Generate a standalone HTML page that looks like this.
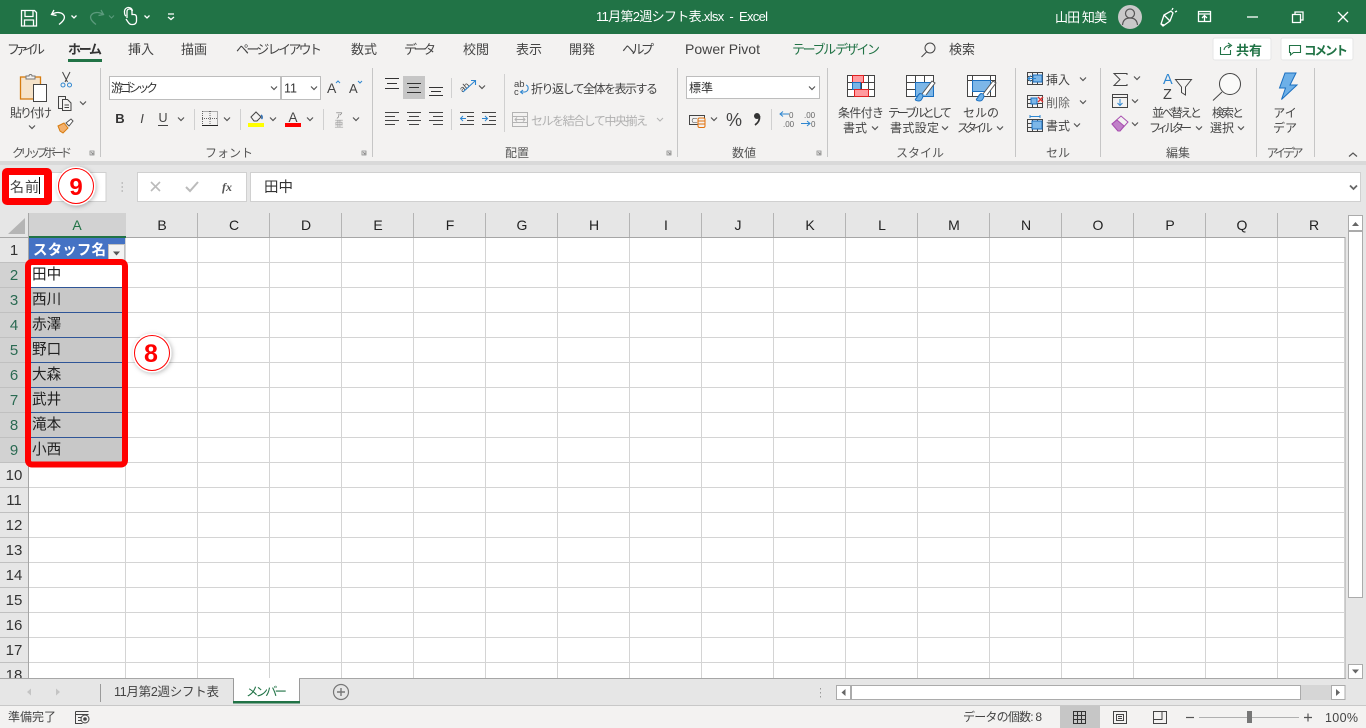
<!DOCTYPE html>
<html lang="ja"><head><meta charset="utf-8"><title>11月第2週シフト表.xlsx - Excel</title>
<style>
html,body{margin:0;padding:0;width:1366px;height:728px;overflow:hidden;background:#fff}
svg{display:block;position:absolute;left:0;top:0}
text{font-family:"Liberation Sans","Noto Sans CJK JP",sans-serif;font-size:12px;fill:#444;white-space:pre}
.tab{font-size:13px;fill:#444}
.tl{font-size:13px;fill:#fff}
.g{font-size:12px;fill:#555}
.m{text-anchor:middle}
.rh{font-size:15px;text-anchor:middle;fill:#333}
.rs{font-size:15px;text-anchor:middle;fill:#2a6a52}
.ch{font-size:14px;text-anchor:middle;fill:#222}
.c{font-size:14.6px;fill:#222}
.i{fill:none;stroke:#444;stroke-width:1}
.w{fill:none;stroke:#fff;stroke-width:1.3}
.cv{fill:none;stroke:#555;stroke-width:1.2}
</style></head><body>
<svg width="1366" height="728" viewBox="0 0 1366 728" xmlns="http://www.w3.org/2000/svg">
<defs>
<path id="c" d="M-3-1.5L0 1.5L3-1.5" fill="none" stroke="#555" stroke-width="1.2"/>
<path id="d" d="M0 0h4v4h-4zM1 1l2 2M3 1.5v1.5h-1.5" fill="none" stroke="#888" stroke-width=".8"/>
<filter id="sh" x="-40%" y="-40%" width="180%" height="180%"><feDropShadow dx="1" dy="1" stdDeviation="2.5" flood-color="#000" flood-opacity=".28"/></filter>
</defs>

<!-- backgrounds -->
<rect width="1366" height="728" fill="#e6e6e6"/>
<rect width="1366" height="34" fill="#217346"/>
<rect y="34" width="1366" height="127" fill="#f3f2f1"/>
<rect y="161" width="1366" height="4" fill="#d9d9d9"/>

<!-- quick access -->
<g class="w">
<path d="M21.5 10.5h13l2 2v13.5h-15zM25 10.5v6h8v-6M24.5 26v-6h9v6"/>
<path d="M54 10l-2.500 4.500 5 1M52 14.500c4-3 10-2.500 12 1 1.500 3-1 6-5 9"/>
</g>
<path d="M71.500 15.500L74 18l2.500-2.500" class="w" stroke-width="1"/>
<path d="M101 10l2.500 4.500-5 1M103 14.500c-4-3-10-2.500-12 1-1.500 3 1 6 5 9" fill="none" stroke="#5b9a7c" stroke-width="1.300"/>
<path d="M109 15.500L111.500 18l2.500-2.500" fill="none" stroke="#5b9a7c" stroke-width="1"/>
<path d="M127 18v-6.500a2.500 2.500 0 0 1 5 0v3h2c2 0 2.500 1.500 2.500 3v3.500c0 2-1.500 3.500-3.500 3.500h-1.500c-1.500 0-2.500-1-3.500-2.500l-2-3M126 16c-1-.5-1.500-2-1.500-4a4 4 0 0 1 8-1" class="w" stroke-width="1.200"/>
<path d="M144.500 15.500L147 18l2.500-2.500M168 14h6M168 17l3 2.500 3-2.500" class="w" stroke-width="1"/>

<!-- title -->
<text class="tl" x="596" y="21" textLength="172" lengthAdjust="spacing">11月第2週シフト表.xlsx  -  Excel</text>
<text class="tl" x="1055" y="22" textLength="52" lengthAdjust="spacing">山田 知美</text>
<circle cx="1130" cy="17" r="12" fill="#c9c9c9"/>
<circle cx="1130" cy="13.500" r="4.500" fill="none" stroke="#555" stroke-width="1.200"/>
<path d="M1122.500 25c.5-5 3.500-7 7.500-7s7 2 7.500 7" fill="none" stroke="#555" stroke-width="1.200"/>
<path d="M1161 24l3-9 7-4 2 2-3 8-7 5zM1164 15l6 6M1172 10l1-2M1175 12l2-1M1161 24l3 1" class="w" stroke-width="1.100"/>
<path d="M1198.500 11.500h12v10h-12zM1198.500 14h12M1204.500 21v-5M1202 18l2.500-2.500 2.500 2.500" class="w" stroke-width="1.100"/>
<path d="M1247 17h11" class="w"/>
<path d="M1292.500 14.500h8v8h-8zM1295 14.500v-2.500h8v8h-2.500" class="w" stroke-width="1.100"/>
<path d="M1338 12l10 10M1348 12l-10 10" class="w" stroke-width="1.200"/>

<!-- tabs -->
<text class="tab" x="7" y="54" textLength="38" lengthAdjust="spacing">ファイル</text>
<text class="tab" x="68" y="54" textLength="34" lengthAdjust="spacing" style="font-weight:700;fill:#333">ホーム</text>
<rect x="68" y="59" width="34" height="3" fill="#217346"/>
<text class="tab" x="128" y="54">挿入</text>
<text class="tab" x="181" y="54">描画</text>
<text class="tab" x="236" y="54" textLength="86" lengthAdjust="spacing">ページ レイアウト</text>
<text class="tab" x="351" y="54">数式</text>
<text class="tab" x="404" y="54" textLength="32" lengthAdjust="spacing">データ</text>
<text class="tab" x="463" y="54">校閲</text>
<text class="tab" x="516" y="54">表示</text>
<text class="tab" x="569" y="54">開発</text>
<text class="tab" x="622" y="54" textLength="32" lengthAdjust="spacing">ヘルプ</text>
<text class="tab" x="685" y="54" textLength="75" lengthAdjust="spacing" style="font-size:14px">Power Pivot</text>
<text class="tab" x="792" y="54" textLength="88" lengthAdjust="spacing" style="fill:#217346">テーブル デザイン</text>
<circle cx="930" cy="48" r="5" class="i"/><path d="M926.500 52l-5 5" class="i"/>
<text class="tab" x="949" y="54">検索</text>

<rect x="1213" y="38" width="58" height="22" rx="2" fill="#fff" stroke="#e6e6e6"/>
<path d="M1220.500 47v7.500h10V50M1224 50c.5-3 2.500-4.500 6-4.500M1228 43l3.500 2.500-3.500 2.500" fill="none" stroke="#217346" stroke-width="1.100"/>
<text x="1236" y="55" style="font-size:13px;font-weight:700;fill:#217346">共有</text>
<rect x="1281" y="38" width="72" height="22" rx="2" fill="#fff" stroke="#e6e6e6"/>
<path d="M1289.500 45.500h11v7h-7l-3 2.500v-2.500h-1z" fill="none" stroke="#217346" stroke-width="1.100"/>
<text x="1304" y="55" textLength="44" lengthAdjust="spacing" style="font-size:12.500px;font-weight:700;fill:#217346">コメント</text>

<!-- group separators -->
<path d="M100.500 68v89M372.500 68v89M677.500 68v89M827.500 68v89M1015.500 68v89M1100.500 68v89M1256.500 68v89M1314.500 68v89" stroke="#c6c6c6" fill="none"/>
<path d="M194.500 109v21M240.500 109v21M323.500 109v21M451.500 78v20M451.500 109v21M504.500 74v58M771.500 109v21" stroke="#d0d0d0" fill="none"/>

<!-- clipboard -->
<rect x="20.500" y="77" width="20" height="22" fill="#f6e3c9" stroke="#d67b0e" stroke-width="1.300"/>
<path d="M26 79v-3h3a1.500 1.500 0 0 1 3 0h3v3z" fill="#f3f2f1" stroke="#777"/>
<rect x="33.500" y="84.500" width="13" height="17" fill="#fff" stroke="#444"/>
<text class="m" x="31" y="117" textLength="42" lengthAdjust="spacing">貼り付け</text>
<use href="#c" x="32" y="127"/>
<path d="M62.500 72l5 10M70 72l-5 10" class="i"/>
<circle cx="63" cy="85" r="2" fill="none" stroke="#2e86d0"/><circle cx="69.500" cy="85" r="2" fill="none" stroke="#2e86d0"/>
<path d="M58.500 96.500h7v12h-7z" class="i"/><path d="M62.500 99.500h5l3.500 3.500v7.500h-8.500z" fill="#f3f2f1" stroke="#444"/><path d="M64.500 105h4.500M64.500 107.500h4.500" class="i"/>
<use href="#c" x="83" y="103"/>
<path d="M58 126l6-3 4 5-5 5-3-2z" fill="#f3b06b" stroke="#d67b0e"/><path d="M66 123l5-4 2 2-4 5z" fill="#fff" stroke="#555"/>
<text class="g" x="12" y="157" textLength="60" lengthAdjust="spacing">クリップボード</text>
<use href="#d" x="90" y="151"/>

<!-- font -->
<rect x="109.500" y="76.500" width="171" height="23" fill="#fff" stroke="#bdbdbd"/>
<rect x="281.500" y="76.500" width="39" height="23" fill="#fff" stroke="#bdbdbd"/>
<text x="111" y="92" textLength="47" lengthAdjust="spacing" style="fill:#333">游ゴシック</text>
<use href="#c" x="274" y="88"/>
<text x="284" y="92.500" style="fill:#333;font-size:12.500px">11</text>
<use href="#c" x="314" y="88"/>
<text x="327" y="93" style="font-size:14px">A</text><path d="M336 83l2-2 2 2" fill="none" stroke="#2e86d0"/>
<text x="349" y="93" style="font-size:13px">A</text><path d="M358 81l2 2 2-2" fill="none" stroke="#2e86d0"/>
<text class="m" x="120" y="123" style="font-weight:700;font-size:13px;fill:#333">B</text>
<text class="m" x="142" y="123" style="font-style:italic;font-size:13px">I</text>
<text class="m" x="163" y="122" style="font-size:12.500px">U</text><path d="M158 125.500h10" stroke="#444"/>
<use href="#c" x="181" y="119"/>
<path d="M202.500 111.500h15v14h-15" fill="none" stroke="#666" stroke-dasharray="1 1"/><path d="M202.500 111v15M210 111v14M202 118.500h16" stroke="#666" stroke-dasharray="1 1" fill="none"/><path d="M202 125.500h16" stroke="#222"/>
<use href="#c" x="227" y="119"/>
<path d="M251 117l5-5 5 5-4 4h-3zM256 112l3 3" class="i"/><path d="M261 115c1.500 1 1.500 3 .5 4" fill="none" stroke="#2e6fb5" stroke-width="1.500"/>
<rect x="248" y="123" width="16" height="4" fill="#ff0"/>
<use href="#c" x="273" y="119"/>
<text class="m" x="293" y="122" style="font-size:13.500px">A</text>
<rect x="285" y="123" width="16" height="4" fill="#f00"/>
<use href="#c" x="310" y="119"/>
<text class="m" x="339" y="118" style="font-size:7.500px;fill:#777">ア</text>
<text class="m" x="339" y="127" style="font-size:9px;fill:#999">亜</text>
<use href="#c" x="356" y="119"/>
<text class="g m" x="229" y="157">フォント</text>
<use href="#d" x="362" y="151"/>

<!-- alignment -->
<rect x="403" y="76" width="22" height="23" fill="#c6c6c6"/>
<path d="M385 78.500h14M387 83.500h10M385 88.500h14M407 83.500h14M409 87.500h10M407 92.500h14M429 87.500h14M431 91.500h10M429 95.500h14" stroke="#333" fill="none"/>
<path d="M385 112.500h14M385 116.500h10M385 120.500h14M385 124.500h10M407 112.500h14M409 116.500h10M407 120.500h14M409 124.500h10M429 112.500h14M433 116.500h10M429 120.500h14M433 124.500h10" stroke="#444" fill="none"/>
<text x="460" y="90" transform="rotate(-40 465 88)" style="font-size:9px">ab</text>
<path d="M463 92l12-11M471 80.500h4.500v4.500" fill="none" stroke="#2e86d0" stroke-width="1.100"/>
<use href="#c" x="482" y="87"/>
<path d="M460 112.500h14M467 116.500h7M467 120.500h7M460 124.500h14M482 112.500h14M489 116.500h7M489 120.500h7M482 124.500h14" stroke="#444" fill="none"/>
<path d="M466 118.500h-5.500M463 116l-2.500 2.500 2.500 2.500M482 118.500h5.500M485 116l2.500 2.500-2.500 2.500" fill="none" stroke="#2e86d0"/>
<text x="514" y="87" style="font-size:9.500px">ab</text><text x="514" y="95" style="font-size:9.500px">c</text>
<path d="M526 85c3 1 3 6-1 7h-4M523 90l-2.500 2 2.500 2" fill="none" stroke="#2e86d0" stroke-width="1.100"/>
<text x="531" y="93" textLength="127" lengthAdjust="spacing" style="fill:#444">折り返して全体を表示する</text>
<path d="M512.500 112.500h15v14h-15zM512.500 116.500h15M512.500 122.500h15M515 119.500h10M517 117.500l-2 2 2 2M523 117.500l2 2-2 2" fill="none" stroke="#b3b3b3"/>
<text x="531" y="125" textLength="117" lengthAdjust="spacing" style="fill:#b0b0b0">セルを結合して中央揃え</text>
<path d="M657 118l3 3 3-3" fill="none" stroke="#b3b3b3"/>
<text class="g m" x="517" y="157">配置</text>
<use href="#d" x="667" y="151"/>

<!-- number -->
<rect x="686.500" y="76.500" width="133" height="22" fill="#fff" stroke="#bdbdbd"/>
<text x="689" y="92" style="fill:#333">標準</text>
<use href="#c" x="812" y="88"/>
<path d="M689.500 115.500h15v9h-15z" class="i"/><text x="691" y="123" style="font-size:7px">⊂⊂</text>
<rect x="698" y="118" width="7" height="9.500" rx="1.500" fill="#f3f2f1" stroke="#e1700a"/>
<path d="M698 121h7M698 124h7" stroke="#e1700a"/>
<use href="#c" x="714" y="119"/>
<text class="m" x="734" y="126" style="font-size:18px">%</text>
<circle cx="757" cy="116" r="3" fill="#333"/><path d="M759.500 116c.3 4-1.500 7-4.500 9" fill="none" stroke="#333" stroke-width="1.800"/>
<path d="M789 114h-9M783 111.500l-3 2.500 3 2.500" fill="none" stroke="#2e86d0"/>
<text x="789" y="118" style="font-size:8px;fill:#666">0</text><text x="783" y="127" style="font-size:8px;fill:#666">.00</text>
<text x="804" y="118" style="font-size:8px;fill:#666">.00</text><text x="811" y="127" style="font-size:8px;fill:#666">0</text>
<path d="M801 123.500h9M807 121l3 2.500-3 2.500" fill="none" stroke="#2e86d0"/>
<text class="g m" x="744" y="157">数値</text>
<use href="#d" x="817" y="151"/>

<!-- styles -->
<path d="M847.500 75.500h27v21h-27zM847.500 82.500h27M847.500 89.500h27M854.500 75.500v21M868.500 75.500v21M861.500 82.500v7" fill="#fff" stroke="#444"/>
<rect x="852.500" y="75.500" width="11" height="7" fill="#ff9a9e" stroke="#e02020"/>
<rect x="852.500" y="82.500" width="8" height="7" fill="#78b4e6" stroke="#1a6fc0"/>
<rect x="854.500" y="89.500" width="14" height="7" fill="#ff9a9e" stroke="#e02020"/>
<text class="m" x="861" y="117" textLength="46" lengthAdjust="spacing">条件付き</text>
<text class="m" x="855" y="132">書式</text><use href="#c" x="875" y="128"/>
<path d="M906.500 75.500h27v21h-27zM906.500 82.500h27M906.500 89.500h27M915.500 75.500v21M924.500 75.500v21" fill="#fff" stroke="#444"/>
<rect x="915.500" y="82.500" width="18" height="14" fill="#7db7e8" stroke="#1a6fc0"/>
<path d="M919 101c-3 0-4-1-3.500-2 2-1 1.500-4 4.500-5.500 2 0 3 1.500 3 3-1 3-2 4.500-4 4.500z" fill="#6db0e8" stroke="#1a6fc0"/>
<path d="M922 94l10-13 3 2-9 12" fill="#fff" stroke="#555"/>
<text class="m" x="920" y="117" textLength="64" lengthAdjust="spacing">テーブルとして</text>
<text class="m" x="914.500" y="132" textLength="49" lengthAdjust="spacing">書式設定</text><use href="#c" x="945" y="128"/>
<path d="M967.500 75.500h28v21h-28zM967.500 80.500h28M972.500 75.500v21M990.500 75.500v21" fill="#fff" stroke="#444"/>
<rect x="972.500" y="80.500" width="18" height="11" fill="#7db7e8" stroke="#1a6fc0"/>
<path d="M980 101c-3 0-4-1-3.500-2 2-1 1.500-4 4.500-5.500 2 0 3 1.500 3 3-1 3-2 4.500-4 4.500z" fill="#6db0e8" stroke="#1a6fc0"/>
<path d="M983 94l10-13 3 2-9 12" fill="#fff" stroke="#555"/>
<text class="m" x="981" y="117">セルの</text>
<text class="m" x="975" y="132" textLength="36" lengthAdjust="spacing">スタイル</text><use href="#c" x="1000" y="128"/>
<text class="g m" x="920" y="157">スタイル</text>

<!-- cells -->
<path d="M1027.500 72.500h15v12h-15zM1027.500 76.500h15M1027.500 80.500h15M1032.500 72.500v12M1037.500 72.500v12" fill="none" stroke="#444"/>
<rect x="1033" y="75" width="9" height="7" fill="#7db7e8" stroke="#1a6fc0"/>
<path d="M1036 78.500h-8M1031 75.500l-3 3 3 3" fill="none" stroke="#2e86d0" stroke-width="1.100"/>
<text x="1046" y="84">挿入</text><use href="#c" x="1083" y="79"/>
<path d="M1027.500 95.500h15v12h-15zM1027.500 99.500h5M1027.500 103.500h15M1037.500 103.500v4M1032.500 103.500v4" fill="none" stroke="#444"/>
<rect x="1031" y="98" width="6" height="6" fill="#7db7e8" stroke="#1a6fc0"/>
<path d="M1038 97l5 5M1043 97l-5 5" stroke="#e03030" stroke-width="1.300"/>
<text x="1046" y="107" style="fill:#666">削除</text><use href="#c" x="1083" y="102"/>
<path d="M1027.500 119.500h15v12h-15zM1027.500 123.500h15M1027.500 127.500h15M1032.500 119.500v12M1037.500 119.500v12" fill="none" stroke="#444"/>
<rect x="1032" y="121" width="10" height="8" fill="#7db7e8" stroke="#1a6fc0"/>
<path d="M1030 116.500h10M1030 115v3M1040 115v3" stroke="#2e86d0" fill="none"/>
<text x="1046" y="130">書式</text><use href="#c" x="1077" y="125"/>
<text class="g m" x="1058" y="157">セル</text>

<!-- editing -->
<path d="M1127 75v-1.500h-13l6 6-6 6h13v-1.500" fill="none" stroke="#444"/>
<use href="#c" x="1137" y="78"/>
<rect x="1112.500" y="94.500" width="15" height="13" fill="none" stroke="#444"/><path d="M1112.500 97.500h15" stroke="#444"/>
<path d="M1120 99v6.500M1117.500 103l2.500 2.500 2.500-2.500" fill="none" stroke="#2e86d0"/>
<use href="#c" x="1135" y="101"/>
<path d="M1112 124l9-8 7 6-8 9h-2z" fill="#f3f2f1" stroke="#a84fb0"/><path d="M1112 124l5-4 7 6-4 5h-2z" fill="#c080c8" stroke="#a84fb0"/>
<use href="#c" x="1135" y="124"/>
<text x="1163" y="84" style="font-size:14.500px;fill:#2e86d0">A</text>
<text x="1163" y="99" style="font-size:14.500px">Z</text>
<path d="M1175.500 79.500h16l-6 7.500v8l-4-2.500v-5.500z" fill="none" stroke="#444"/>
<text class="m" x="1177" y="117" textLength="50" lengthAdjust="spacing">並べ替えと</text>
<text class="m" x="1170.500" y="132" textLength="43" lengthAdjust="spacing">フィルター</text><use href="#c" x="1199" y="128"/>
<circle cx="1230" cy="84" r="10.500" fill="#fff" fill-opacity=".6" stroke="#444"/><path d="M1222 92l-9 8.500" stroke="#444" fill="none"/>
<text class="m" x="1228" y="117" textLength="32" lengthAdjust="spacing">検索と</text>
<text class="m" x="1222" y="132">選択</text><use href="#c" x="1241" y="128"/>
<text class="g m" x="1178" y="157">編集</text>

<!-- ideas -->
<path d="M1285 73h11l-6 12h7l-15.500 14.500 4-11.500h-6z" fill="#6db0e8" stroke="#1a6fc0"/>
<text class="m" x="1285" y="117">アイ</text>
<text class="m" x="1285" y="132">デア</text>
<text class="g m" x="1285" y="157" textLength="37" lengthAdjust="spacing">アイデア</text>
<path d="M1349 156.500l4-3.500 4 3.500" fill="none" stroke="#555" stroke-width="1.200"/>

<!-- formula bar -->
<rect x="40" y="172.500" width="66" height="29" fill="#fff" stroke="#d0d0d0"/>
<rect x="2" y="168" width="50" height="37" rx="5" fill="#f00"/>
<rect x="9" y="175" width="35" height="23" fill="#fff"/>
<text x="10" y="192" textLength="29" lengthAdjust="spacing" style="font-size:14px;fill:#444">名前</text>
<path d="M39.500 177v17" stroke="#000"/>
<circle cx="76" cy="186" r="19.500" fill="#fff" filter="url(#sh)"/>
<circle cx="76" cy="186" r="17.500" fill="#fff" stroke="#f00" stroke-width="1"/>
<text class="m" x="76" y="195" style="font-size:24px;font-weight:700;fill:#f00">9</text>
<path d="M121.500 183h1.500M121.500 187h1.500M121.500 191h1.500" stroke="#999" fill="none"/>
<rect x="137.500" y="172.500" width="109" height="29" fill="#fff" stroke="#d0d0d0"/>
<path d="M151 182l9 9M160 182l-9 9" stroke="#bbb" stroke-width="1.600" fill="none"/>
<path d="M186 187l4 4 8-9" stroke="#bbb" stroke-width="2" fill="none"/>
<text x="222" y="191" style="font-family:'Liberation Serif',serif;font-style:italic;font-weight:700;font-size:12px;fill:#555">fx</text>
<rect x="250.500" y="172.500" width="1110" height="29" fill="#fff" stroke="#d0d0d0"/>
<text x="264" y="192" style="font-size:14.500px;fill:#333">田中</text>
<path d="M1350 185.500l3.500 3.500 3.500-3.500" fill="none" stroke="#666" stroke-width="1.800"/>

<!-- sheet -->
<rect x="29" y="238" width="1316" height="441" fill="#fff"/>
<path d="M25 218v16h-17z" fill="#b5b5b5"/>
<rect x="29" y="213" width="97" height="24" fill="#d2d2d2"/>
<path d="M197.500 213v24M269.500 213v24M341.500 213v24M413.500 213v24M485.500 213v24M557.500 213v24M629.500 213v24M701.500 213v24M773.500 213v24M845.500 213v24M917.500 213v24M989.500 213v24M1061.500 213v24M1133.500 213v24M1205.500 213v24M1277.500 213v24" stroke="#b4b4b4" fill="none"/>
<path d="M0 237.500H1345M28.500 213V679M1345 237V679" stroke="#a6a6a6" fill="none"/>
<rect x="29" y="236" width="97" height="2" fill="#217346"/>
<rect x="0" y="263" width="28" height="200" fill="#d2d2d2"/>
<path d="M0 262.500h28M0 287.500h28M0 312.500h28M0 337.500h28M0 362.500h28M0 387.500h28M0 412.500h28M0 437.500h28M0 462.500h28M0 487.500h28M0 512.500h28M0 537.500h28M0 562.500h28M0 587.500h28M0 612.500h28M0 637.500h28M0 662.500h28" stroke="#c0c0c0" fill="none"/>
<path d="M125.500 238V679M197.500 238V679M269.500 238V679M341.500 238V679M413.500 238V679M485.500 238V679M557.500 238V679M629.500 238V679M701.500 238V679M773.500 238V679M845.500 238V679M917.500 238V679M989.500 238V679M1061.500 238V679M1133.500 238V679M1205.500 238V679M1277.500 238V679M29 262.500H1345M29 287.500H1345M29 312.500H1345M29 337.500H1345M29 362.500H1345M29 387.500H1345M29 412.500H1345M29 437.500H1345M29 462.500H1345M29 487.500H1345M29 512.500H1345M29 537.500H1345M29 562.500H1345M29 587.500H1345M29 612.500H1345M29 637.500H1345M29 662.500H1345" stroke="#d4d4d4" fill="none"/>

<text class="ch" x="77" y="230" style="fill:#217346">A</text>
<text class="ch" x="162" y="230">B</text><text class="ch" x="234" y="230">C</text><text class="ch" x="306" y="230">D</text><text class="ch" x="378" y="230">E</text><text class="ch" x="450" y="230">F</text><text class="ch" x="522" y="230">G</text><text class="ch" x="594" y="230">H</text><text class="ch" x="666" y="230">I</text><text class="ch" x="738" y="230">J</text><text class="ch" x="810" y="230">K</text><text class="ch" x="882" y="230">L</text><text class="ch" x="954" y="230">M</text><text class="ch" x="1026" y="230">N</text><text class="ch" x="1098" y="230">O</text><text class="ch" x="1170" y="230">P</text><text class="ch" x="1242" y="230">Q</text><text class="ch" x="1314" y="230">R</text>

<text class="rh" x="14" y="255">1</text>
<text class="rs" x="14" y="280">2</text><text class="rs" x="14" y="305">3</text><text class="rs" x="14" y="330">4</text><text class="rs" x="14" y="355">5</text><text class="rs" x="14" y="380">6</text><text class="rs" x="14" y="405">7</text><text class="rs" x="14" y="430">8</text><text class="rs" x="14" y="455">9</text>
<text class="rh" x="14" y="480">10</text><text class="rh" x="14" y="505">11</text><text class="rh" x="14" y="530">12</text><text class="rh" x="14" y="555">13</text><text class="rh" x="14" y="580">14</text><text class="rh" x="14" y="605">15</text><text class="rh" x="14" y="630">16</text><text class="rh" x="14" y="655">17</text><text class="rh" x="14" y="680">18</text>

<!-- table -->
<rect x="29" y="238" width="96" height="25" fill="#4472c4"/>
<text x="33" y="255" textLength="73" lengthAdjust="spacing" style="font-size:14.500px;font-weight:700;fill:#fff">スタッフ名</text>
<rect x="108.500" y="244.500" width="16" height="16" fill="#f3f3f3" stroke="#c0c0c0"/>
<path d="M113 251.500h7l-3.500 4z" fill="#555"/>
<rect x="29" y="263" width="96" height="24" fill="#fff"/>
<rect x="29" y="288" width="96" height="175" fill="#c8c8c8"/>
<path d="M29 287.500h96M29 312.500h96M29 337.500h96M29 362.500h96M29 387.500h96M29 412.500h96M29 437.500h96" stroke="#2f5597" fill="none"/>
<text class="c" x="32" y="279">田中</text>
<text class="c" x="32" y="304">西川</text>
<text class="c" x="32" y="329">赤澤</text>
<text class="c" x="32" y="354">野口</text>
<text class="c" x="32" y="379">大森</text>
<text class="c" x="32" y="404">武井</text>
<text class="c" x="32" y="429">滝本</text>
<text class="c" x="32" y="454">小西</text>
<rect x="28" y="262" width="97" height="202.500" rx="4" fill="none" stroke="#f00" stroke-width="6"/>
<circle cx="152" cy="353" r="19.500" fill="#fff" filter="url(#sh)"/>
<circle cx="152" cy="353" r="17.500" fill="#fff" stroke="#f00" stroke-width="1"/>
<text class="m" x="151" y="362" style="font-size:25px;font-weight:700;fill:#f00">8</text>

<!-- v scrollbar -->
<rect x="1346" y="213" width="20" height="466" fill="#e6e6e6"/>
<rect x="1348.500" y="215.500" width="14" height="15" fill="#fff" stroke="#ababab"/>
<path d="M1352 226h7l-3.500-4z" fill="#666"/>
<rect x="1348.500" y="231.500" width="14" height="366" fill="#fff" stroke="#ababab"/>
<rect x="1348.500" y="664.500" width="14" height="14" fill="#fff" stroke="#ababab"/>
<path d="M1352 669.500h7l-3.500 4z" fill="#666"/>

<!-- sheet tabs -->
<rect y="679" width="1366" height="26" fill="#e6e6e6"/>
<path d="M0 678.500H1346" stroke="#a6a6a6"/>
<path d="M31 688.500l-4 3.500 4 3.500zM56 688.500l4 3.500-4 3.500z" fill="#c4c4c4"/>
<path d="M100.500 684v18" stroke="#9a9a9a"/>
<text x="114" y="696" textLength="105" lengthAdjust="spacing" style="font-size:12.500px;fill:#444">11月第2週シフト表</text>
<path d="M233.500 679v24M299.500 679v24" stroke="#9a9a9a"/>
<rect x="234" y="678" width="65" height="23" fill="#fff"/>
<rect x="233" y="701" width="67" height="2.500" fill="#217346"/>
<text x="246" y="696" textLength="41" lengthAdjust="spacing" style="font-size:12.500px;fill:#217346">メンバー</text>
<circle cx="341" cy="692" r="7.500" fill="none" stroke="#777" stroke-width="1.200"/>
<path d="M337 692h8M341 688v8" stroke="#777" stroke-width="1.400"/>
<path d="M820.500 688v1.500M820.500 692v1.500M820.500 696v1.500" stroke="#999"/>
<rect x="836.500" y="685.500" width="14" height="14" fill="#fff" stroke="#ababab"/>
<path d="M845.500 689v7l-4-3.500z" fill="#666"/>
<rect x="851.500" y="685.500" width="449" height="14" fill="#fff" stroke="#ababab"/>
<rect x="1301" y="685" width="30" height="15" fill="#d6d6d6"/>
<rect x="1331.500" y="685.500" width="13.500" height="14" fill="#fff" stroke="#ababab"/>
<path d="M1336 689v7l4-3.500z" fill="#666"/>

<!-- status -->
<rect y="706" width="1366" height="22" fill="#f3f2f1"/>
<path d="M0 705.500H1366" stroke="#c8c8c8"/>
<text x="8" y="721" textLength="48" lengthAdjust="spacing">準備完了</text>
<path d="M75.500 711.500h13M75.500 711.500v12h7M75.500 714.500h13M78 717.500h3M78 720.500h3" class="i"/>
<circle cx="85" cy="719" r="4" fill="#f3f2f1" stroke="#444"/><circle cx="85" cy="719" r="1.800" fill="#444"/>
<text x="963" y="721" textLength="79" lengthAdjust="spacing">データの個数: 8</text>
<rect x="1060" y="706" width="40" height="22" fill="#c6c6c6"/>
<path d="M1073.500 711.500h12v12h-12zM1077.500 711.500v12M1081.500 711.500v12M1073.500 715.500h12M1073.500 719.500h12" fill="none" stroke="#333"/>
<path d="M1113.500 711.500h13v12h-13zM1116.500 714.500h7v6h-7zM1118 716.500h4M1118 718.500h4" class="i"/>
<path d="M1153.500 711.500h13v12h-13zM1153.500 719.500h8.500v-8" class="i"/>
<path d="M1186 717.500h8" stroke="#555" stroke-width="1.200"/>
<path d="M1199 717.500h100" stroke="#b0b0b0"/>
<rect x="1247" y="711" width="5" height="12" fill="#777"/>
<path d="M1304 717.500h8M1308 713.500v8" stroke="#555" stroke-width="1.200"/>
<text x="1325" y="722" textLength="33" lengthAdjust="spacing" style="font-size:12.500px">100%</text>
</svg>
</body></html>
